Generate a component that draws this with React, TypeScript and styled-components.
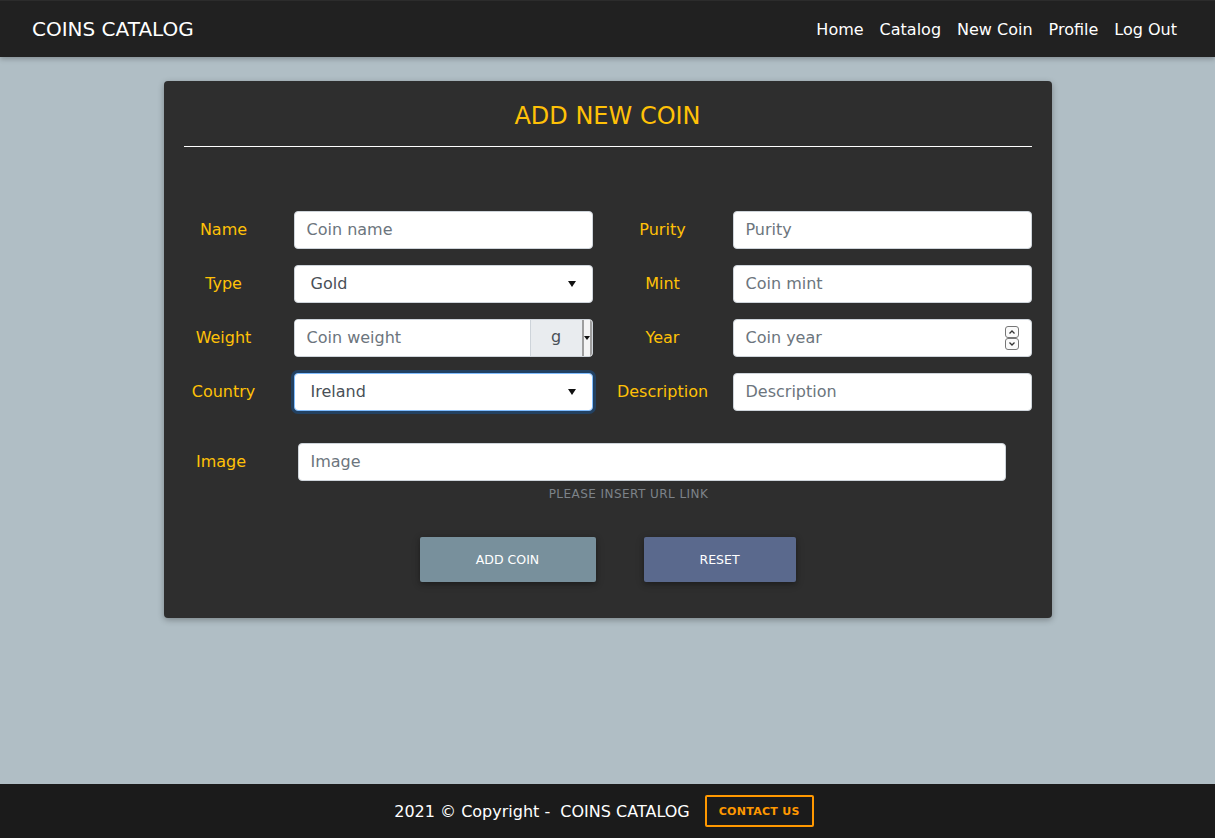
import React from "react";
import styled, { createGlobalStyle } from "styled-components";

const Global = createGlobalStyle`
  html, body { margin: 0; padding: 0; }
  body {
    font-family: "DejaVu Sans", "Liberation Sans", sans-serif;
    background: #b0bec5;
    color: #fff;
  }
  * { box-sizing: border-box; }
`;

const Page = styled.div`
  min-height: 100vh;
  display: flex;
  flex-direction: column;
`;

const NavBar = styled.nav`
  height: 57px;
  background: #212121;
  border-top: 1px solid #2c2c2c;
  display: flex;
  align-items: center;
  justify-content: space-between;
  padding: 0 30px 0 32px;
  box-shadow: 0 2px 5px rgba(0, 0, 0, 0.25);
`;

const Brand = styled.a`
  font-size: 20px;
  color: #fff;
  text-decoration: none;
`;

const NavLinks = styled.div`
  display: flex;
`;

const NavLink = styled.a`
  color: #fff;
  font-size: 16px;
  padding: 0 8px;
  text-decoration: none;
`;

const Main = styled.main`
  flex: 1;
  display: flex;
  justify-content: center;
  padding-top: 24px;
`;

const Card = styled.section`
  width: 888px;
  height: 537px;
  background: #2e2e2e;
  border-radius: 4px;
  box-shadow: 0 2px 6px rgba(0, 0, 0, 0.3);
  padding: 21px 20px 0;
`;

const Title = styled.h1`
  margin: 0;
  font-weight: 400;
  font-size: 24px;
  color: #ffc107;
  text-align: center;
  line-height: 28px;
`;

const Divider = styled.hr`
  border: 0;
  border-top: 1px solid #fff;
  margin: 16px 0 0;
`;

const FormGrid = styled.div`
  margin: 64px 0 0 -15px;
  display: grid;
  grid-template-columns: 424px 424px;
  column-gap: 15px;
  row-gap: 16px;
`;

const Field = styled.div`
  display: grid;
  grid-template-columns: 110px 1fr;
  column-gap: 15px;
  align-items: center;
`;

const Label = styled.label`
  color: #ffc107;
  font-size: 16px;
  text-align: center;
  padding-bottom: 2px;
`;

const inputBase = `
  height: 38px;
  width: 100%;
  border: 1px solid #ced4da;
  border-radius: 4px;
  background: #fff;
  font-family: "DejaVu Sans", "Liberation Sans", sans-serif;
  font-size: 16px;
  color: #495057;
  padding: 5px 12px 7px;
  outline: none;
`;

const Input = styled.input`
  ${inputBase}
  &::placeholder { color: #6c757d; }
`;

const SelectBox = styled.div<{ $focused?: boolean }>`
  ${inputBase}
  display: flex;
  align-items: center;
  justify-content: space-between;
  padding: 5px 16px 7px;
  color: #495057;
  border-color: ${(p) => (p.$focused ? "#80bdff" : "#ced4da")};
  box-shadow: ${(p) => (p.$focused ? "0 0 0 3px rgba(0,123,255,0.25)" : "none")};
`;

const Caret = styled.span`
  width: 0;
  height: 0;
  border-left: 4px solid transparent;
  border-right: 4px solid transparent;
  border-top: 6px solid #111;
  margin-top: 2px;
`;

const Group = styled.div`
  display: flex;
  height: 38px;
  border: 1px solid #ced4da;
  border-radius: 4px;
  overflow: hidden;
  background: #fff;
`;

const GroupInput = styled.input`
  flex: 1;
  min-width: 0;
  border: 0;
  outline: none;
  font-family: "DejaVu Sans", "Liberation Sans", sans-serif;
  font-size: 16px;
  padding: 5px 12px 7px;
  color: #495057;
  &::placeholder { color: #6c757d; }
`;

const Addon = styled.span`
  width: 62px;
  background: #e9ecef;
  border-left: 1px solid #ced4da;
  display: flex;
  align-items: center;
  color: #495057;
  font-size: 16px;
`;

const AddonText = styled.span`
  flex: 1;
  text-align: center;
  padding-bottom: 3px;
`;

const MiniSelect = styled.span`
  width: 10px;
  height: 100%;
  border-left: 2px solid #9e9e9e;
  border-right: 2px solid #9e9e9e;
  background: #f4f4f4;
  display: flex;
  align-items: center;
  justify-content: center;
`;

const MiniCaret = styled.span`
  width: 0;
  height: 0;
  border-left: 3px solid transparent;
  border-right: 3px solid transparent;
  border-top: 4px solid #111;
`;

const NumberWrap = styled.div`
  position: relative;
`;

const Spinner = styled.div`
  position: absolute;
  right: 13px;
  top: 7px;
  width: 14px;
  display: flex;
  flex-direction: column;
`;

const SpinBtn = styled.span`
  height: 12px;
  border: 1px solid #777;
  border-radius: 3px;
  background: #fafafa;
  display: flex;
  align-items: center;
  justify-content: center;
`;

const ImageRow = styled.div`
  margin: 32px 0 0 -15px;
  display: grid;
  grid-template-columns: 105px 708px;
  column-gap: 24px;
  align-items: center;
`;

const Helper = styled.small`
  display: block;
  text-align: center;
  margin: 6px 0 0 249px;
  width: 392px;
  font-size: 12px;
  color: #7d8389;
  letter-spacing: 0.45px;
`;

const Buttons = styled.div`
  display: flex;
  justify-content: center;
  gap: 48px;
  margin-top: 36px;
`;

const Btn = styled.button<{ $bg: string; $w: number }>`
  width: ${(p) => p.$w}px;
  height: 45px;
  border: 0;
  border-radius: 2px;
  background: ${(p) => p.$bg};
  color: #fff;
  font-family: "DejaVu Sans", "Liberation Sans", sans-serif;
  font-size: 12.5px;
  text-transform: uppercase;
  box-shadow: 0 2px 5px rgba(0, 0, 0, 0.25), 0 2px 10px rgba(0, 0, 0, 0.15);
`;

const Footer = styled.footer`
  height: 54px;
  background: #1b1b1b;
  display: flex;
  align-items: center;
  justify-content: center;
  gap: 15px;
  font-size: 16px;
  color: #fff;
  padding-right: 7px;
`;

const Contact = styled.a`
  border: 2px solid #ff9800;
  border-radius: 2px;
  color: #ff9800;
  font-weight: 700;
  font-size: 11px;
  height: 32px;
  width: 109px;
  display: flex;
  align-items: center;
  justify-content: center;
  letter-spacing: 0.3px;
`;

const Chevron = ({ up }: { up?: boolean }) => (
  <svg width="8" height="6" viewBox="0 0 8 6">
    <path
      d={up ? "M1.5 4.5 L4 2 L6.5 4.5" : "M1.5 1.5 L4 4 L6.5 1.5"}
      fill="none"
      stroke="#333"
      strokeWidth="1.3"
    />
  </svg>
);

export default function App() {
  return (
    <Page>
      <Global />
      <NavBar>
        <Brand>COINS CATALOG</Brand>
        <NavLinks>
          <NavLink>Home</NavLink>
          <NavLink>Catalog</NavLink>
          <NavLink>New Coin</NavLink>
          <NavLink>Profile</NavLink>
          <NavLink>Log Out</NavLink>
        </NavLinks>
      </NavBar>
      <Main>
        <Card>
          <Title>ADD NEW COIN</Title>
          <Divider />
          <FormGrid>
            <Field>
              <Label>Name</Label>
              <Input placeholder="Coin name" />
            </Field>
            <Field>
              <Label>Purity</Label>
              <Input placeholder="Purity" />
            </Field>
            <Field>
              <Label>Type</Label>
              <SelectBox>
                <span>Gold</span>
                <Caret />
              </SelectBox>
            </Field>
            <Field>
              <Label>Mint</Label>
              <Input placeholder="Coin mint" />
            </Field>
            <Field>
              <Label>Weight</Label>
              <Group>
                <GroupInput placeholder="Coin weight" />
                <Addon>
                  <AddonText>g</AddonText>
                  <MiniSelect>
                    <MiniCaret />
                  </MiniSelect>
                </Addon>
              </Group>
            </Field>
            <Field>
              <Label>Year</Label>
              <NumberWrap>
                <Input placeholder="Coin year" />
                <Spinner>
                  <SpinBtn>
                    <Chevron up />
                  </SpinBtn>
                  <SpinBtn>
                    <Chevron />
                  </SpinBtn>
                </Spinner>
              </NumberWrap>
            </Field>
            <Field>
              <Label>Country</Label>
              <SelectBox $focused>
                <span>Ireland</span>
                <Caret />
              </SelectBox>
            </Field>
            <Field>
              <Label>Description</Label>
              <Input placeholder="Description" />
            </Field>
          </FormGrid>
          <ImageRow>
            <Label>Image</Label>
            <Input placeholder="Image" />
          </ImageRow>
          <Helper>PLEASE INSERT URL LINK</Helper>
          <Buttons>
            <Btn $bg="#78909c" $w={176}>Add Coin</Btn>
            <Btn $bg="#5a698d" $w={152}>Reset</Btn>
          </Buttons>
        </Card>
      </Main>
      <Footer>
        <span>2021 © Copyright -&nbsp; COINS CATALOG</span>
        <Contact>CONTACT US</Contact>
      </Footer>
    </Page>
  );
}
